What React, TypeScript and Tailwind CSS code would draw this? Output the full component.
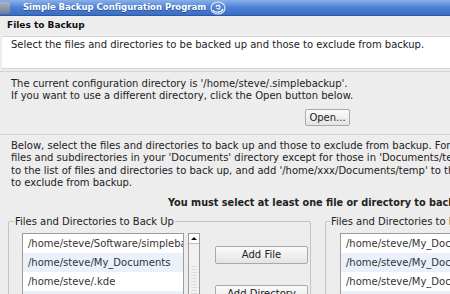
import React from 'react';

const leftItems = [
  '/home/steve/Software/simplebackup',
  '/home/steve/My_Documents',
  '/home/steve/.kde',
];

const rightItems = [
  '/home/steve/My_Documents/temp',
  '/home/steve/My_Documents/cache',
  '/home/steve/My_Documents/old',
];

function SwirlIcon() {
  return (
    <svg width="16" height="14" viewBox="0 0 16 14" fill="none">
      <ellipse cx="8" cy="7" rx="7" ry="6" stroke="#dfe8f8" strokeWidth="1.2" />
      <path d="M3 9 C5 12, 11 12, 13 8" stroke="#ffffff" strokeWidth="1.3" />
      <path d="M6 6 C7 3.5, 10 4, 10 6.5 C10 8.5, 7 8.5, 7 7" stroke="#ffffff" strokeWidth="1.2" />
    </svg>
  );
}

function Button({ label, className }: { label: string; className: string }) {
  return (
    <div
      className={`flex items-center justify-center rounded-[2px] border border-[#a9a9a9] bg-gradient-to-b from-[#fbfbfb] to-[#e4e4e4] text-[10px] text-[#222] whitespace-nowrap ${className}`}
    >
      {label}
    </div>
  );
}

function FileList({ items }: { items: string[] }) {
  return (
    <div className="flex flex-col border border-[#9c9c9c] bg-white">
      {items.concat(['']).map((item, idx) => (
        <div
          key={idx}
          className={`h-[19px] flex items-center pl-[5px] whitespace-nowrap overflow-hidden text-[10px] text-[#333] ${
            idx % 2 === 1 ? 'bg-[#eaf1fa]' : 'bg-white'
          }`}
        >
          {item}
        </div>
      ))}
    </div>
  );
}

export default function App() {
  return (
    <div
      className="w-[450px] h-[294px] overflow-hidden bg-[#ededed] text-[#222] flex flex-col"
      style={{ fontFamily: '"DejaVu Sans", Verdana, sans-serif' }}
    >
      {/* Title bar */}
      <div className="h-[16px] shrink-0 flex items-center bg-gradient-to-b from-[#8bb0e8] via-[#4d80d6] to-[#3a6cc4] border-b border-[#2d5aa8]">
        <div className="w-[10px] h-[12px] bg-gradient-to-b from-[#aab6c8] to-[#6d7c92] rounded-r-[2px]" />
        <span className="ml-[13px] text-[8.5px] font-bold text-white whitespace-nowrap [text-shadow:0_1px_0_#2a4f8e]">
          Simple Backup Configuration Program
        </span>
        <span className="ml-[4px] flex items-center">
          <SwirlIcon />
        </span>
      </div>

      {/* Header */}
      <div className="h-[20px] shrink-0 flex items-center pl-[7px] text-[9px] font-bold text-[#111]">
        Files to Backup
      </div>
      <div className="h-[33px] shrink-0 ml-[2px] bg-white border-t border-b border-[#d6d6d6] pl-[9px] pt-[2px] text-[10px] leading-[12px] whitespace-nowrap">
        Select the files and directories to be backed up and those to exclude from backup.
      </div>

      {/* Configuration directory */}
      <div className="mt-[2px] h-[64px] shrink-0 border-t border-b border-[#d4d4d4] flex flex-col pl-[11px] pt-[6px]">
        <div className="text-[10px] leading-[12px] whitespace-nowrap">
          The current configuration directory is '/home/steve/.simplebackup'.
        </div>
        <div className="text-[10px] leading-[12px] whitespace-nowrap">
          If you want to use a different directory, click the Open button below.
        </div>
        <div className="pl-[294px] pt-[7px]">
          <Button label="Open..." className="w-[45px] h-[17px]" />
        </div>
      </div>

      {/* Explanation */}
      <div className="pl-[11px] pt-[5px] text-[10px] leading-[12.3px] whitespace-nowrap">
        <div>Below, select the files and directories to back up and those to exclude from backup. For example, to back up all</div>
        <div>files and subdirectories in your 'Documents' directory except for those in 'Documents/temp', add '/home/xxx/Documents'</div>
        <div>to the list of files and directories to back up, and add '/home/xxx/Documents/temp' to the list of files and directories</div>
        <div>to exclude from backup.</div>
      </div>
      <div className="pl-[168px] pt-[7px] text-[9.7px] font-bold whitespace-nowrap">
        You must select at least one file or directory to back up.
      </div>

      {/* Group boxes */}
      <div className="flex pl-[8px] pt-[10px] gap-[14px]">
        <div className="relative w-[303px] h-[90px] shrink-0 border border-[#c4c4c4] rounded-[2px] pt-[11px] pl-[13px] flex gap-[4px]">
          <span className="absolute -top-[8px] left-[5px] bg-[#ededed] px-[1px] text-[10px] whitespace-nowrap">
            Files and Directories to Back Up
          </span>
          <div className="w-[162px]">
            <FileList items={leftItems} />
          </div>
          <div className="w-[12px] h-[80px] border border-[#9c9c9c] bg-[#f2f2f2] flex flex-col">
            <div className="h-[10px] flex items-center justify-center border-b border-[#c0c0c0] bg-white">
              <div className="w-0 h-0 border-l-[3px] border-r-[3px] border-b-[3px] border-l-transparent border-r-transparent border-b-[#111]" />
            </div>
            <div className="flex-1 mx-[2px] mt-[20px] bg-[repeating-linear-gradient(0deg,#dcdcdc_0px,#dcdcdc_1px,transparent_1px,transparent_3px)]" />
          </div>
          <div className="flex flex-col pl-[11px] pt-[13px]">
            <Button label="Add File" className="w-[93px] h-[18px]" />
            <Button label="Add Directory" className="w-[93px] h-[18px] mt-[21px]" />
          </div>
        </div>
        <div className="relative flex-1 h-[90px] border border-[#c4c4c4] rounded-[2px] pt-[11px] pl-[14px]">
          <span className="absolute -top-[8px] left-[4px] bg-[#ededed] px-[1px] text-[10px] whitespace-nowrap">
            Files and Directories to Exclude
          </span>
          <div className="w-[140px]">
            <FileList items={rightItems} />
          </div>
        </div>
      </div>
    </div>
  );
}
